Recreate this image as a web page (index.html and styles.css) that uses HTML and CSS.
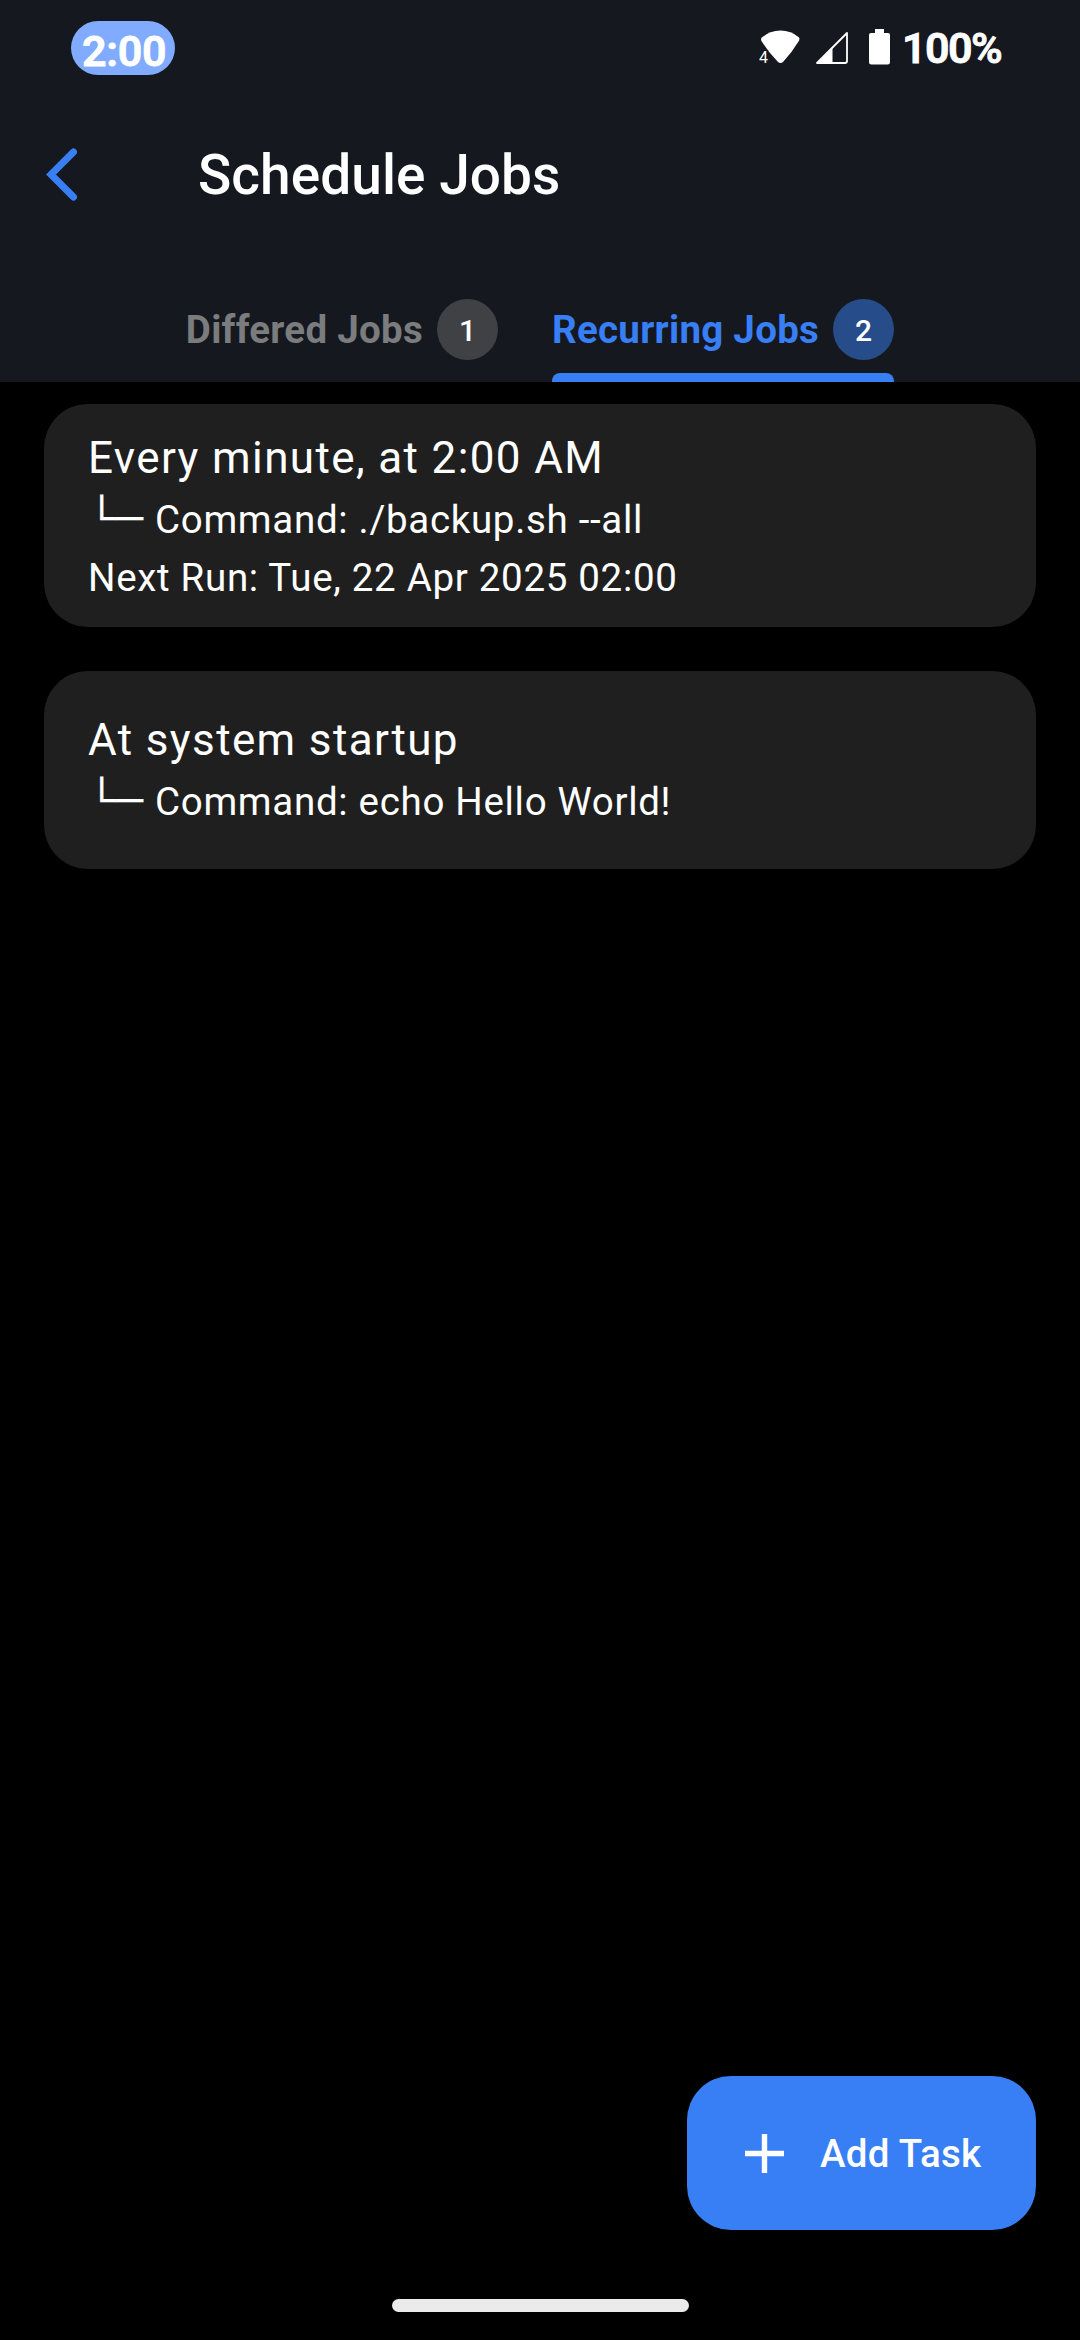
FILE: index.html
```html
<!DOCTYPE html>
<html lang="en">
<head>
<meta charset="utf-8">
<title>Schedule Jobs</title>
<link rel="stylesheet" href="styles.css">
</head>
<body>
<div class="screen">
  <header class="top">
    <div class="status">
      <div class="clock"><span>2:00</span></div>
      <div class="indicators">
        <svg class="wifi" width="40" height="34" viewBox="0 0 40 34">
          <path d="M1.3 10.8 Q.5 8.8 2.2 7.3 Q10 .5 20.5 .5 Q31 .5 38.8 7.3 Q40 8.6 39 10.8 Q32 22.5 23 32 Q20.5 34 18 32 Q8 21.5 1.3 10.8Z" fill="#fff"/>
          <text class="wifi-gen" x="-1" y="33">4</text>
        </svg>
        <svg class="signal" width="34" height="34" viewBox="0 0 34 34">
          <path d="M2 32 L32 2 V30 Q32 32 30 32Z" fill="none" stroke="#fff" stroke-width="1.8" stroke-linejoin="round"/>
          <path d="M2 32 L17.5 16 V32Z" fill="#fff"/>
        </svg>
        <svg class="battery" width="21" height="36" viewBox="0 0 21 36">
          <path d="M6 0H15V4H19Q21 4 21 6V33Q21 35.5 18.5 35.5H2.5Q0 35.5 0 33V6Q0 4 2 4H6Z" fill="#fff"/>
        </svg>
        <span class="percent">100%</span>
      </div>
    </div>
    <div class="appbar">
      <svg class="back" width="34" height="54" viewBox="0 0 34 54">
        <path d="M29.5 5 L7 27.5 L29.5 50" fill="none" stroke="#387ff5" stroke-width="7" stroke-linecap="round" stroke-linejoin="miter"/>
      </svg>
      <h1 class="title">Schedule Jobs</h1>
    </div>
    <nav class="tabs">
      <div class="tab"><span class="tab-label">Differed Jobs</span><span class="badge">1</span></div>
      <div class="tab active"><span class="tab-label">Recurring Jobs</span><span class="badge">2</span></div>
    </nav>
  </header>
  <main class="jobs">
    <section class="card">
      <p class="when">Every minute, at 2:00 AM</p>
      <p class="command"><span class="branch">└─</span><span>Command: ./backup.sh --all</span></p>
      <p class="next">Next Run: Tue, 22 Apr 2025 02:00</p>
    </section>
    <section class="card startup">
      <p class="when">At system startup</p>
      <p class="command"><span class="branch">└─</span><span>Command: echo Hello World!</span></p>
    </section>
  </main>
  <footer class="bottom">
    <button class="add">
      <svg width="39" height="39" viewBox="0 0 39 39"><path d="M19.5 0V39M0 19.5H39" stroke="#fff" stroke-width="5.4"/></svg>
      <span>Add Task</span>
    </button>
    <div class="home"></div>
  </footer>
</div>
</body>
</html>
```
FILE: styles.css
```css
* { box-sizing: border-box; margin: 0; padding: 0; }
body { background: #000; font-family: Roboto, sans-serif; color: #fff; }
.screen { width: 1080px; height: 2340px; display: flex; flex-direction: column; overflow: hidden; }

.top { height: 382px; background: #15181f; flex: none; }
.status { height: 96px; display: flex; justify-content: space-between; align-items: flex-start; padding: 21px 80px 0 71px; }
.clock { width: 104px; height: 54px; border-radius: 27px; background: #80abff; padding-left: 11px; white-space: nowrap; }
.clock span, .percent { font-family: Roboto, sans-serif; font-weight: 600; font-size: 43px; line-height: 60px; -webkit-text-stroke: .8px #fff; }
.indicators { display: flex; align-items: flex-start; }
.wifi { margin-top: 9px; overflow: visible; }
.wifi-gen { font: 16px Roboto, sans-serif; fill: #fff; stroke: #15181f; stroke-width: 2px; paint-order: stroke; }
.signal { margin: 10px 0 0 15px; }
.battery { margin: 8px 0 0 20px; }
.clock span { letter-spacing: -.3px; }
.percent { margin-left: 12px; width: 98px; line-height: 54px; letter-spacing: -1.6px; white-space: nowrap; }

.appbar { height: 158px; display: flex; align-items: center; padding: 0 44px; }
.back { margin-top: -2px; }
.title { font-size: 55px; font-weight: 500; line-height: 66px; margin-left: 120px; letter-spacing: .05px; white-space: nowrap; }

.tabs { height: 128px; display: flex; justify-content: center; gap: 54px; }
.tab { display: flex; align-items: flex-start; gap: 14px; padding-top: 45px; color: #7b7c7e; }
.tab-label { font-size: 38.5px; font-weight: 700; line-height: 62px; letter-spacing: .275px; white-space: nowrap; }
.badge { width: 61px; height: 61px; border-radius: 50%; background: #3f4145; color: #fff; font-size: 30px; font-weight: 500; line-height: 63px; text-align: center; }
.active { color: #387ff5; display: grid; grid-template-columns: auto 61px; grid-template-rows: 61px 9px; gap: 13px 14px; }
.active::after { content: ""; grid-column: 1 / 3; height: 9px; border-radius: 8px 8px 0 0; background: #387ff5; }
.active .badge { background: #264d8a; }

.jobs { flex: 1; padding: 22px 44px; display: flex; flex-direction: column; gap: 44px; }
.card { height: 223px; border-radius: 44px; background: #1f1f1f; padding: 21px 44px; white-space: nowrap; }
.startup { height: 198px; padding-top: 36px; }
.when { font-size: 44px; line-height: 66px; letter-spacing: 1.375px; }
.command, .next { font-size: 38.5px; line-height: 58px; letter-spacing: .69px; }
.command { display: flex; }
.branch { font-family: "Liberation Mono", monospace; font-size: 46px; line-height: 60px; height: 58px; letter-spacing: 0; width: 67px; }

.bottom { padding: 0 44px 28px; display: flex; flex-direction: column; align-items: flex-end; }
.add { width: 349px; height: 154px; border: 0; border-radius: 44px; background: #387ff5; color: #fff; display: flex; align-items: center; padding-left: 58px; gap: 36px; font: 500 38.5px Roboto, sans-serif; letter-spacing: .275px; white-space: nowrap; }
.home { align-self: center; width: 297px; height: 13px; border-radius: 7px; background: #ebebeb; margin-top: 69px; }
```
